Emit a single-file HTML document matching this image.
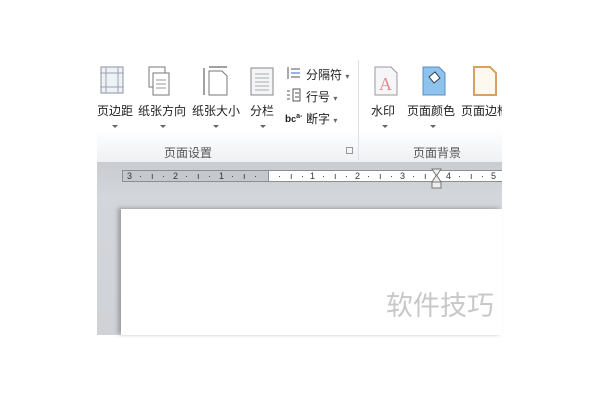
<!DOCTYPE html>
<html><head><meta charset="utf-8"><style>
body{margin:0;width:600px;height:400px;background:#fff;position:relative;overflow:hidden;font-family:"Liberation Sans","Noto Sans CJK SC",sans-serif;}
.a{position:absolute}
.rib{left:97px;top:55px;width:405px;height:107px;background:linear-gradient(#fff 0%,#fff 70%,#eef0f3 100%);border-bottom:1px solid #c9ccd1;overflow:hidden}
.lab{position:absolute;font-size:12px;color:#222;white-space:nowrap}
.arr{position:absolute;width:0;height:0;border-left:3px solid transparent;border-right:3px solid transparent;border-top:3px solid #666}
.g{position:absolute;font-size:12px;color:#555}
.gray{left:97px;top:163px;width:405px;height:172px;background:linear-gradient(#c9ccd1,#d3d6da 20%,#cfd2d6)}
.ruler{left:122px;top:170px;width:380px;height:12px;background:#fff;border:1px solid #8a8f96;border-right:none;box-sizing:border-box;font-size:9px;color:#333;line-height:10px;font-family:"Liberation Sans",sans-serif;overflow:hidden}
.ruler span{position:absolute;top:0}
.page{left:121px;top:209px;width:381px;height:126px;background:#fff;box-shadow:-3px -1px 4px #9a9da2}
</style></head><body>
<div class="a rib">
 <svg class="a" style="left:0;top:10px" width="30" height="30"><rect x="4" y="2" width="22" height="26" fill="#eef1f6" stroke="#8a93a0"/><line x1="9" y1="2" x2="9" y2="28" stroke="#9aa3b0"/><line x1="21" y1="2" x2="21" y2="28" stroke="#9aa3b0"/><line x1="4" y1="8" x2="26" y2="8" stroke="#9aa3b0"/><line x1="4" y1="22" x2="26" y2="22" stroke="#9aa3b0"/></svg>
 <svg class="a" style="left:48px;top:10px" width="30" height="32"><rect x="4" y="2" width="16" height="20" fill="#fff" stroke="#777"/><rect x="8" y="8" width="16" height="22" fill="#fff" stroke="#777"/><g stroke="#999"><line x1="11" y1="15" x2="21" y2="15"/><line x1="11" y1="19" x2="21" y2="19"/><line x1="11" y1="23" x2="21" y2="23"/></g></svg>
 <svg class="a" style="left:104px;top:10px" width="30" height="32"><line x1="3" y1="3" x2="3" y2="30" stroke="#444"/><line x1="8" y1="2" x2="26" y2="2" stroke="#444"/><path d="M8 6H21L26 11V30H8Z" fill="#fff" stroke="#777"/></svg>
 <svg class="a" style="left:152px;top:10px" width="28" height="32"><rect x="2" y="3" width="22" height="27" fill="#f4f5f7" stroke="#888"/><g stroke="#aaa"><line x1="6" y1="9" x2="20" y2="9"/><line x1="6" y1="13" x2="20" y2="13"/><line x1="6" y1="17" x2="20" y2="17"/><line x1="6" y1="21" x2="20" y2="21"/><line x1="6" y1="25" x2="20" y2="25"/></g></svg>
 <svg class="a" style="left:189px;top:11px" width="16" height="14"><g stroke="#555"><line x1="2" y1="1" x2="2" y2="13"/><line x1="5" y1="3" x2="14" y2="3"/><line x1="5" y1="7" x2="14" y2="7" stroke="#36c"/><line x1="5" y1="11" x2="14" y2="11"/></g></svg>
 <svg class="a" style="left:189px;top:33px" width="16" height="14"><g stroke="#555"><line x1="1" y1="3" x2="4" y2="3"/><line x1="1" y1="7" x2="4" y2="7"/><line x1="1" y1="11" x2="4" y2="11"/><rect x="7" y="1" width="7" height="12" fill="none"/><line x1="9" y1="5" x2="13" y2="5"/><line x1="9" y1="9" x2="13" y2="9"/></g></svg>
 <div class="lab" style="left:188px;top:55px;font-size:10px;font-weight:bold;line-height:14px">b<span style="font-size:9px">c</span><span style="font-size:7px;vertical-align:4px">a-</span></div>
 <div class="lab" style="left:209px;top:11px">分隔符 <span style="font-size:8px;color:#666">▾</span></div>
 <div class="lab" style="left:209px;top:33px">行号 <span style="font-size:8px;color:#666">▾</span></div>
 <div class="lab" style="left:209px;top:55px">断字 <span style="font-size:8px;color:#666">▾</span></div>
 <div class="lab" style="left:0;top:47px">页边距</div>
 <div class="lab" style="left:41px;top:47px">纸张方向</div>
 <div class="lab" style="left:95px;top:47px">纸张大小</div>
 <div class="lab" style="left:153px;top:47px">分栏</div>
 <div class="arr" style="left:15px;top:70px"></div>
 <div class="arr" style="left:63px;top:70px"></div>
 <div class="arr" style="left:116px;top:70px"></div>
 <div class="arr" style="left:163px;top:70px"></div>
 <div class="g" style="left:67px;top:89px">页面设置</div>
 <div class="a" style="left:249px;top:92px;width:5px;height:5px;border:1px solid #999"></div>
 <div class="a" style="left:261px;top:5px;width:1px;height:100px;background:#dde0e4"></div>
 <svg class="a" style="left:274px;top:10px" width="30" height="32"><path d="M4 2H20L26 8V30H4Z" fill="#f6f6f8" stroke="#999"/><text x="8" y="25" font-size="18" fill="#e58a8a" font-family="Liberation Serif">A</text></svg>
 <svg class="a" style="left:323px;top:10px" width="30" height="32"><path d="M3 2H19L25 8V30H3Z" fill="#8ec3ee" stroke="#5a8fc0"/><path d="M9 12l6-5 5 6-6 5z" fill="#fff" stroke="#345"/></svg>
 <svg class="a" style="left:373px;top:10px" width="30" height="32"><path d="M4 2H20L26 8V30H4Z" fill="#fff8ee" stroke="#d9a060" stroke-width="2"/></svg>
 <div class="lab" style="left:274px;top:47px">水印</div>
 <div class="lab" style="left:310px;top:47px">页面颜色</div>
 <div class="lab" style="left:364px;top:47px">页面边框</div>
 <div class="arr" style="left:285px;top:70px"></div>
 <div class="arr" style="left:333px;top:70px"></div>
 <div class="g" style="left:316px;top:89px">页面背景</div>
</div>
<div class="a gray"></div>
<div class="a ruler" id="r"><div class="a" style="left:0;top:0;width:145px;height:10px;background:#c5c9ce;border-right:1px solid #8a8f96"></div></div>
<script>
var r=document.getElementById('r');
var u=[[6,'3'],[52,'2'],[98,'1'],[145,''],[189,'1'],[234,'2'],[279,'3'],[325,'4'],[370,'5']];
var h='';
for(var i=0;i<u.length;i++){var x=u[i][0];if(u[i][1])h+='<span style="left:'+(x-2)+'px">'+u[i][1]+'</span>';
 var t=[[11,'·'],[23,'ı'],[34,'·']];for(var j=0;j<3;j++){h+='<span style="left:'+(x+t[j][0]-1)+'px">'+t[j][1]+'</span>';}}
r.insertAdjacentHTML('beforeend',h);
</script>
<svg class="a" style="left:431px;top:168px" width="12" height="22"><path d="M1 1H10L5.5 8Z" fill="#eee" stroke="#777"/><path d="M1 14H10L5.5 7Z" fill="#eee" stroke="#777"/><rect x="1" y="14" width="9" height="6" fill="#eee" stroke="#777"/></svg>
<div class="a page"></div>
<div class="a" style="left:386px;top:284px;font-size:27px;color:#c8c8c8;font-family:'Noto Sans CJK SC',sans-serif">软件技巧</div>
</body></html>
